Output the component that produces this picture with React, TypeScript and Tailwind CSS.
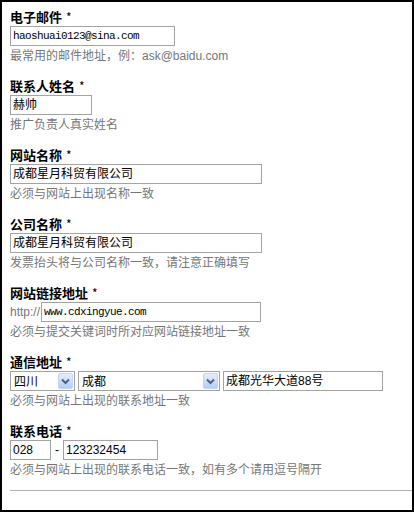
const cjk = "font-['Noto_Sans_CJK_SC',sans-serif]";
const mono = "font-['Liberation_Mono','Noto_Sans_CJK_SC',monospace]";

function Label({ text }: { text: string }) {
  return (
    <div className={`h-[19px] text-[13px] leading-[19px] font-bold text-black ${cjk}`}>
      {text}
      <span className="ml-[4px] font-normal text-[12px]">*</span>
    </div>
  );
}

function Hint({ text }: { text: string }) {
  return (
    <div
      className={`mt-[2px] h-[16px] text-[12px] leading-[16px] text-[#767676] font-['Liberation_Sans','Noto_Sans_CJK_SC',sans-serif]`}
    >
      {text}
    </div>
  );
}

function TextBox({
  value,
  width,
  monoFont,
}: {
  value: string;
  width: string;
  monoFont?: boolean;
}) {
  return (
    <div
      className={`flex h-[20px] items-center border border-[#a3a3a3] bg-white px-[2px] ${width} ${
        monoFont
          ? `${mono} text-[11px] tracking-[-0.6px]`
          : "font-['Liberation_Sans','Noto_Sans_CJK_SC',sans-serif] text-[12px]"
      } text-black whitespace-nowrap overflow-hidden`}
    >
      {value}
    </div>
  );
}

function Select({ value, width }: { value: string; width: string }) {
  return (
    <div
      className={`flex h-[20px] items-center justify-between border border-[#a3a3a3] bg-white pl-[3px] pr-[1px] ${width} font-['Noto_Sans_CJK_SC',sans-serif] text-[12px] text-black`}
    >
      <span>{value}</span>
      <div className="flex h-[16px] w-[15px] items-center justify-center rounded-[2px] border border-[#c3d3fd] bg-gradient-to-b from-[#e6eefc] to-[#b7ccf5]">
        <svg width="9" height="7" viewBox="0 0 9 7">
          <path d="M1 1.5 L4.5 5 L8 1.5" fill="none" stroke="#4d6185" strokeWidth="2" />
        </svg>
      </div>
    </div>
  );
}

function Field({
  label,
  hint,
  children,
}: {
  label: string;
  hint: string;
  children: React.ReactNode;
}) {
  return (
    <div className="mb-[12px]">
      <Label text={label} />
      <div className="flex h-[20px] items-center">{children}</div>
      <Hint text={hint} />
    </div>
  );
}

export default function App() {
  return (
    <div className="h-[512px] w-[414px] overflow-hidden border-2 border-black bg-white pl-[8px] pt-[5px]">
      <Field label="电子邮件" hint="最常用的邮件地址，例：ask@baidu.com">
        <TextBox value="haoshuai0123@sina.com" width="w-[165px]" monoFont />
      </Field>
      <Field label="联系人姓名" hint="推广负责人真实姓名">
        <TextBox value="赫帅" width="w-[82px]" />
      </Field>
      <Field label="网站名称" hint="必须与网站上出现名称一致">
        <TextBox value="成都星月科贸有限公司" width="w-[252px]" />
      </Field>
      <Field label="公司名称" hint="发票抬头将与公司名称一致，请注意正确填写">
        <TextBox value="成都星月科贸有限公司" width="w-[252px]" />
      </Field>
      <Field label="网站链接地址" hint="必须与提交关键词时所对应网站链接地址一致">
        <span className="mr-[1px] text-[12px] text-[#767676] font-['Liberation_Sans',sans-serif]">
          http://
        </span>
        <TextBox value="www.cdxingyue.com" width="w-[220px]" monoFont />
      </Field>
      <Field label="通信地址" hint="必须与网站上出现的联系地址一致">
        <Select value="四川" width="w-[65px]" />
        <div className="w-[3px]" />
        <Select value="成都" width="w-[142px]" />
        <div className="w-[3px]" />
        <TextBox value="成都光华大道88号" width="w-[160px]" />
      </Field>
      <Field label="联系电话" hint="必须与网站上出现的联系电话一致，如有多个请用逗号隔开">
        <TextBox value="028" width="w-[41px]" />
        <span className="mx-[4px] text-[12px] text-black font-['Liberation_Sans',sans-serif]">-</span>
        <TextBox value="123232454" width="w-[95px]" />
      </Field>
      <div className="mt-[12px] h-px bg-[#b0b0b0]" />
    </div>
  );
}
